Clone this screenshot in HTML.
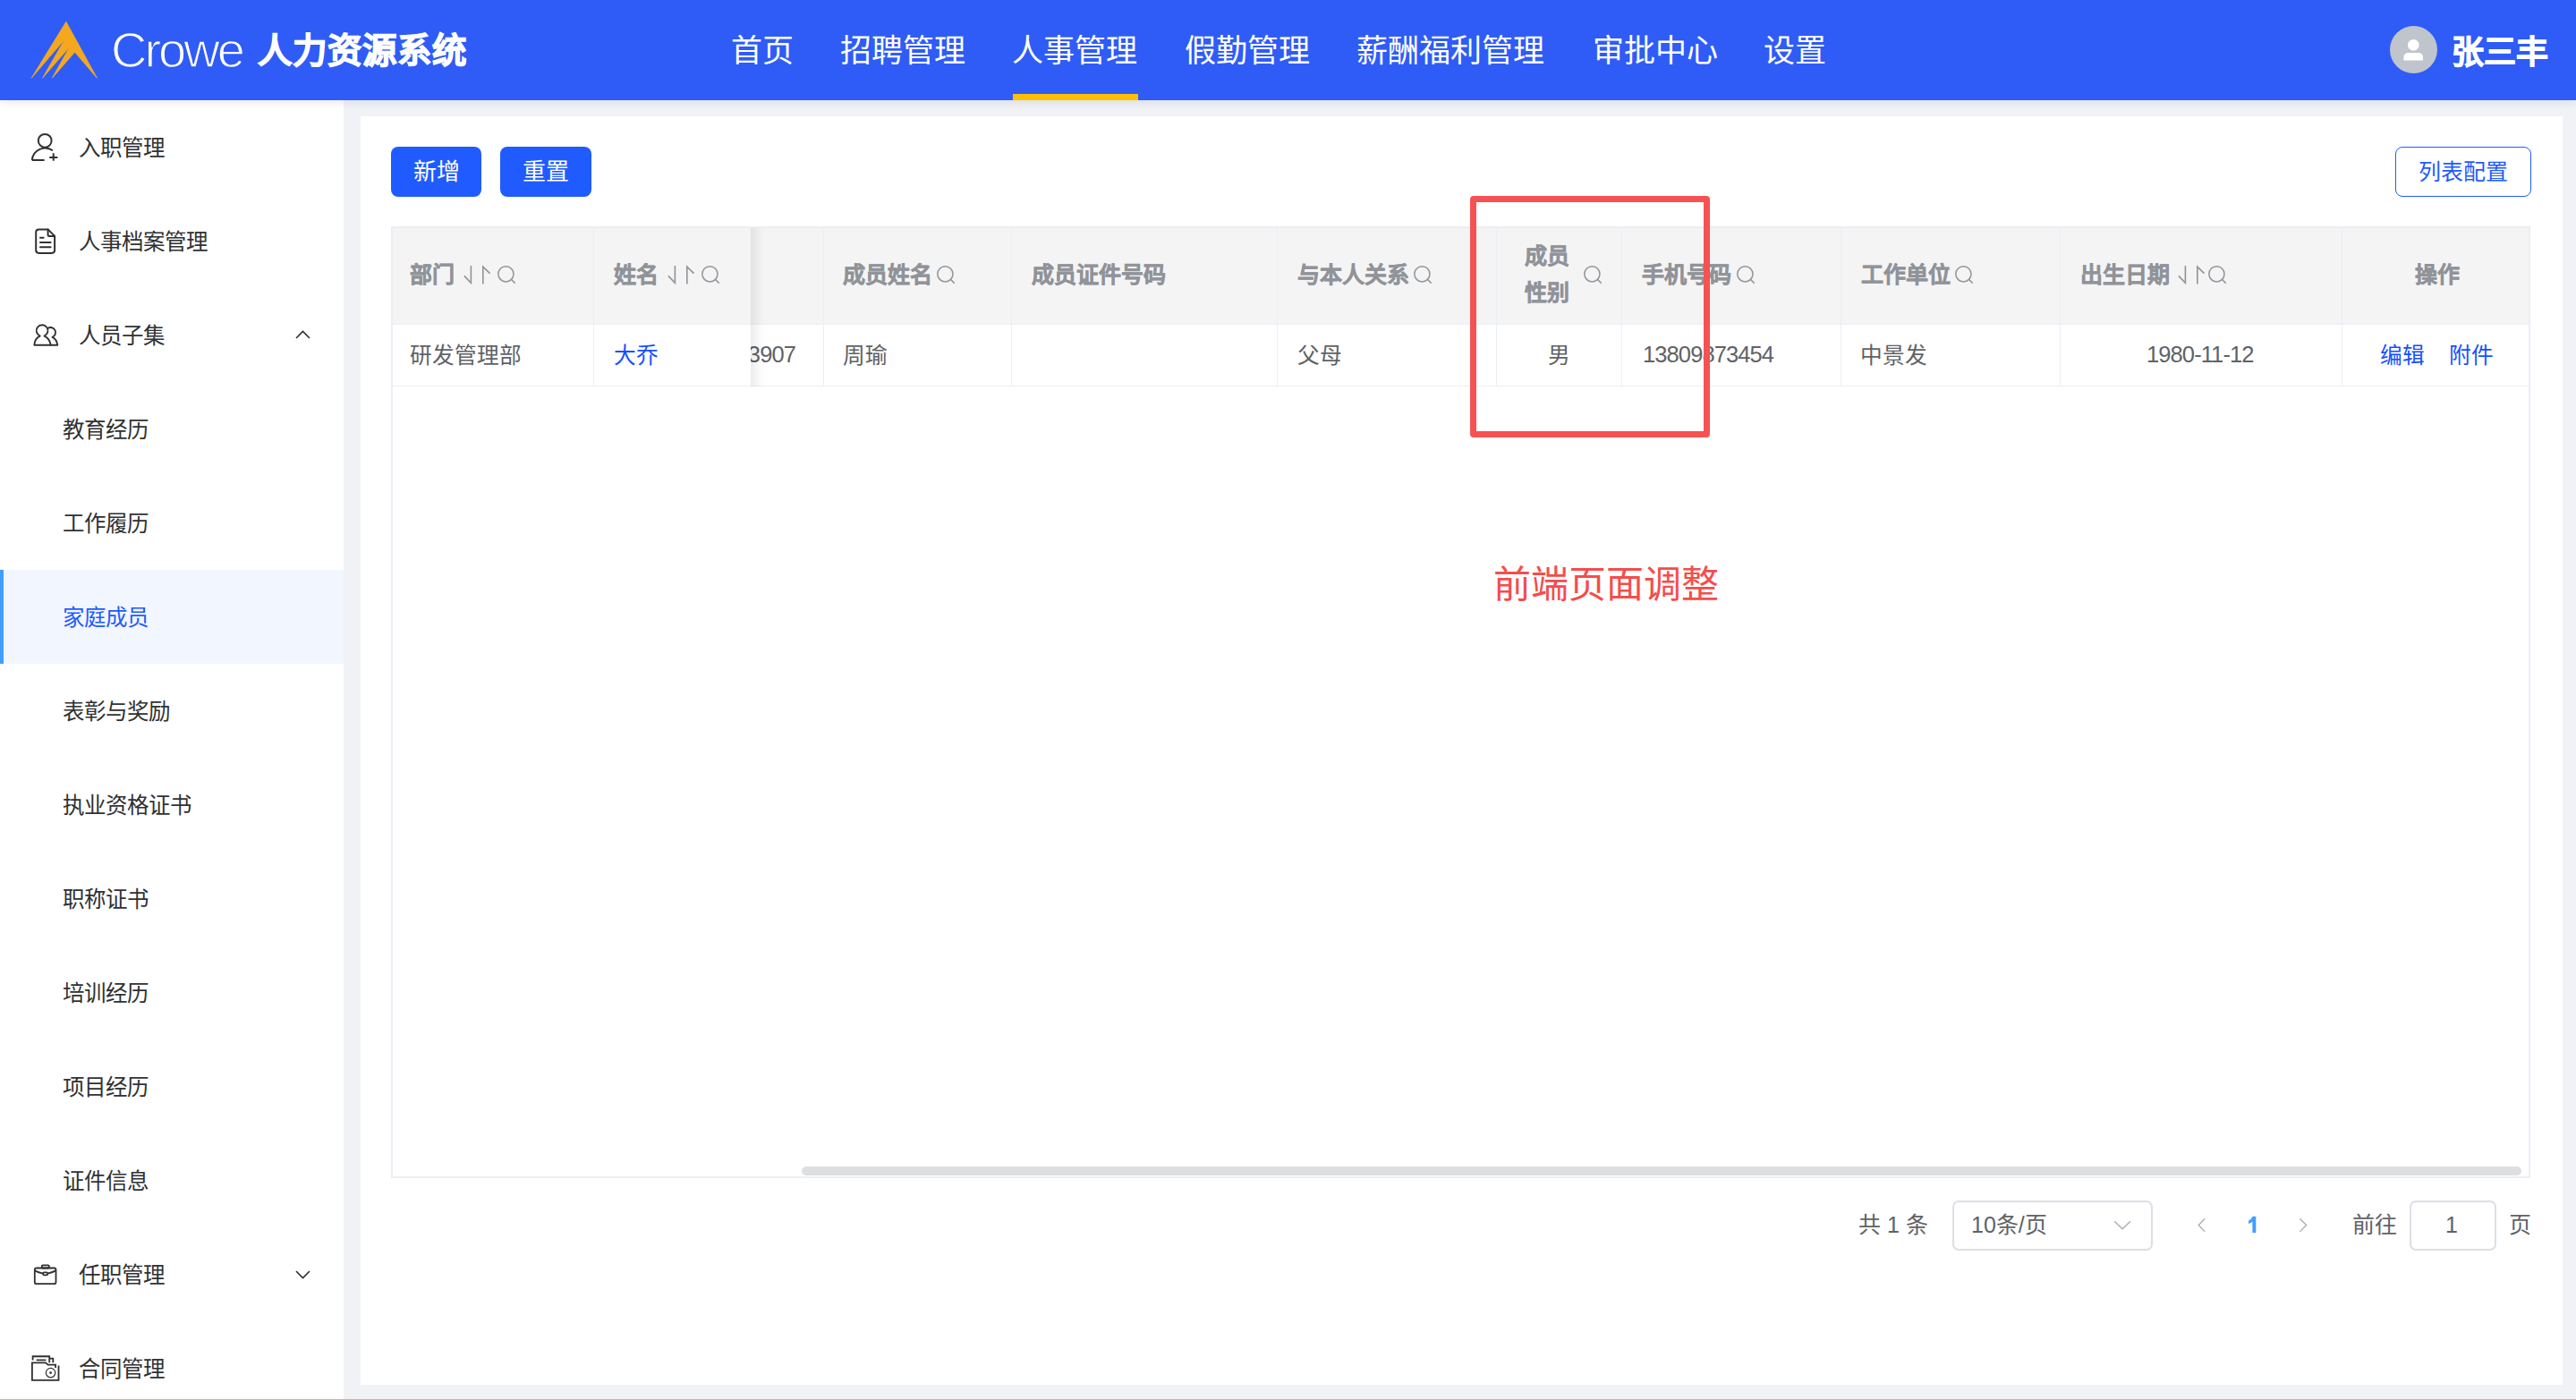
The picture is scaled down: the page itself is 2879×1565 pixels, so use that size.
<!DOCTYPE html>
<html lang="zh-CN">
<head>
<meta charset="utf-8">
<style>
*{margin:0;padding:0;box-sizing:border-box}
html,body{width:2879px;height:1565px;overflow:hidden;background:#F0F2F5;font-family:"Liberation Sans",sans-serif}
.a{position:absolute;white-space:nowrap}
#hdr{position:absolute;left:0;top:0;width:2879px;height:112px;background:#2F5CF6;z-index:5;box-shadow:0 2px 10px rgba(0,0,0,0.10)}
.nav{position:absolute;top:31px;font-size:35px;line-height:52px;color:#fff}
#side{position:absolute;left:0;top:112px;width:384px;height:1453px;background:#fff}
.mi{position:absolute;left:0;width:384px;height:105px;font-size:24.5px;color:#303133}
.mi span{position:absolute;top:1px;line-height:105px}
#card{position:absolute;left:403px;top:130px;width:2461px;height:1418px;background:#fff}
.btn{position:absolute;top:164px;height:56px;border-radius:8px;background:#1F5BFF;color:#fff;font-size:26px;line-height:56px;text-align:center}
#tbl{position:absolute;left:437px;top:253px;width:2391px;height:1064px;border:2px solid #EBEEF5;background:#fff;overflow:hidden}
.th{position:absolute;top:0;height:109px;background:#F5F5F5;border-right:1.5px solid #EBEEF5;border-bottom:1.5px solid #EBEEF5}
.td{position:absolute;top:109px;height:69px;background:#fff;border-right:1.5px solid #EBEEF5;border-bottom:1.5px solid #EBEEF5}
.ht{font-size:25px;font-weight:bold;color:#909399;line-height:40px;-webkit-text-stroke:0.5px #909399}
.bt{font-size:24.7px;color:#606266;line-height:40px}
.num{font-size:25.5px;letter-spacing:-0.9px}
.pg{font-size:25px;line-height:40px;color:#606266}
.pg .n{font-size:25px;display:inline-block}
.act{background:#F2F6FE;color:#1F5BFF}
.act:before{content:"";position:absolute;left:0;top:0;width:4px;height:105px;background:#409EFF}
</style>
</head>
<body>
<div id="hdr">
  <svg class="a" style="left:30px;top:20px" width="85" height="75" viewBox="0 0 85 75">
    <path d="M43.9 4.3 L78.4 67.2 L53.6 38.3 L28.4 67.2 L47.7 32.5 L17.5 67.2 L42.3 24 L5.2 67.2 Z" fill="#F5A81E" stroke="#F5A81E" stroke-width="0.8" stroke-linejoin="round"/>
  </svg>
  <div class="a" style="left:124px;top:20px;font-size:56px;line-height:72px;color:#fff;letter-spacing:-3px;-webkit-text-stroke:1.3px #2F5CF6">Crowe</div>
  <div class="a" style="left:288px;top:29px;font-size:38.5px;line-height:56px;color:#fff;font-weight:bold;-webkit-text-stroke:1.1px #fff">人力资源系统</div>
  <div class="nav" style="left:817px">首页</div>
  <div class="nav" style="left:939px">招聘管理</div>
  <div class="nav" style="left:1131px">人事管理</div>
  <div class="a" style="left:1132px;top:105px;width:140px;height:7px;background:#FFC000"></div>
  <div class="nav" style="left:1324px">假勤管理</div>
  <div class="nav" style="left:1516px">薪酬福利管理</div>
  <div class="nav" style="left:1780px">审批中心</div>
  <div class="nav" style="left:1971px">设置</div>
  <div class="a" style="left:2671px;top:29px;width:53px;height:53px;border-radius:50%;background:#C0C4CC"></div>
  <svg class="a" style="left:2671px;top:29px" width="53" height="53" viewBox="0 0 53 53"><circle cx="26.3" cy="21.3" r="6.3" fill="#fff"/><path d="M15.4 38.5 V35.5 Q15.4 30 21 30 H31.5 Q37 30 37 35.5 V38.5 Z" fill="#fff"/></svg>
  <div class="a" style="left:2740px;top:31px;font-size:36px;line-height:56px;color:#fff;font-weight:bold;-webkit-text-stroke:1px #fff">张三丰</div>
</div>

<div id="side">
  <svg class="a" style="left:25px;top:28px" width="50" height="50" viewBox="0 0 50 50" fill="none" stroke="#303133" stroke-width="2">
    <circle cx="25.2" cy="17.3" r="7.4"/>
    <path d="M10.8 38.9 A14.8 14.8 0 0 1 34 28.2"/>
    <path d="M10.8 38.9 H24.6 M30.2 35.9 H39.3 M34.7 31.3 V39.7"/>
  </svg>
  <div class="mi" style="top:0"><span style="left:88px">入职管理</span></div>
  <svg class="a" style="left:25px;top:133px" width="50" height="50" viewBox="0 0 50 50" fill="none" stroke="#303133" stroke-width="2" stroke-linejoin="round" stroke-linecap="round">
    <path d="M28.6 11.4 H18.4 Q15.2 11.4 15.2 14.6 V34.8 Q15.2 37.9 18.4 37.9 H32.9 Q36.1 37.9 36.1 34.8 V18.9 Z"/>
    <path d="M28.6 11.4 V17.4 Q28.6 18.9 30.1 18.9 H36.1"/>
    <path d="M20 20.7 H23.6 M20 25.9 H31.6 M20 31.2 H31.6"/>
  </svg>
  <div class="mi" style="top:105px"><span style="left:88px">人事档案管理</span></div>
  <svg class="a" style="left:25px;top:238px" width="50" height="50" viewBox="0 0 50 50" fill="none" stroke="#303133" stroke-width="1.9" stroke-linejoin="round">
    <path d="M13.4 35.7 C13.6 30.6 16 27.3 19.7 25.6 A6.4 6.4 0 1 1 24.5 25.6 C28.3 27.3 30.9 30.6 31.6 35.7 Z"/>
    <path d="M28.4 17 A5.6 5.6 0 1 1 33.5 26.9 C36.6 28.3 38.6 31.5 39.3 35.7 H31.6"/>
  </svg>
  <div class="mi" style="top:210px"><span style="left:88px">人员子集</span></div>
  <svg class="a" style="left:326px;top:250px" width="24" height="20" viewBox="0 0 24 20" fill="none" stroke="#303133" stroke-width="1.6"><path d="M5 16 L12.5 8.5 L20 16"/></svg>
  <div class="mi" style="top:315px"><span style="left:70px">教育经历</span></div>
  <div class="mi" style="top:420px"><span style="left:70px">工作履历</span></div>
  <div class="mi act" style="top:525px"><span style="left:70px">家庭成员</span></div>
  <div class="mi" style="top:630px"><span style="left:70px">表彰与奖励</span></div>
  <div class="mi" style="top:735px"><span style="left:70px">执业资格证书</span></div>
  <div class="mi" style="top:840px"><span style="left:70px">职称证书</span></div>
  <div class="mi" style="top:945px"><span style="left:70px">培训经历</span></div>
  <div class="mi" style="top:1050px"><span style="left:70px">项目经历</span></div>
  <div class="mi" style="top:1155px"><span style="left:70px">证件信息</span></div>
  <svg class="a" style="left:25px;top:1288px" width="50" height="50" viewBox="0 0 50 50" fill="none" stroke="#303133" stroke-width="1.8" stroke-linejoin="round">
    <rect x="13.8" y="17.5" width="23.7" height="17.7" rx="2"/>
    <rect x="21.8" y="14.3" width="8" height="3.2" rx="1"/>
    <path d="M13.8 20.4 Q18 22.6 23.2 23.6 M28.2 23.6 Q33 22.6 37.5 20.4"/>
    <rect x="23.2" y="22.4" width="5" height="3" rx="1.2"/>
  </svg>
  <div class="mi" style="top:1260px"><span style="left:88px">任职管理</span></div>
  <svg class="a" style="left:326px;top:1301px" width="24" height="20" viewBox="0 0 24 20" fill="none" stroke="#303133" stroke-width="1.6"><path d="M5 8 L12.5 15.5 L20 8"/></svg>
  <svg class="a" style="left:25px;top:1393px" width="50" height="50" viewBox="0 0 50 50" fill="none" stroke="#303133" stroke-width="1.8">
    <path d="M11.6 15.4 V11.25 H30.2 V18.2 M30.2 13.6 H34.3 V18.2 M15.7 15.4 H26.4"/>
    <path d="M40.5 21.4 V37.9 H10.9 V18.4 H26.1 L28.6 20.7 H37.1 V23.9"/>
    <circle cx="31.6" cy="29.6" r="5.2" stroke-width="1.2"/>
    <circle cx="31.6" cy="29.6" r="1.4" fill="#303133" stroke="none"/>
  </svg>
  <div class="mi" style="top:1365px"><span style="left:88px">合同管理</span></div>
</div>

<div id="card"></div>
<div class="btn" style="left:437px;width:101px">新增</div>
<div class="btn" style="left:559px;width:102px">重置</div>
<div class="a" style="left:2677px;top:164px;width:152px;height:56px;border:1.5px solid #1F5BFF;border-radius:8px;color:#1F5BFF;font-size:25px;line-height:54px;text-align:center">列表配置</div>

<div id="tbl">
<div class="a" style="left:0;top:0;width:2387px;height:107px;background:#F4F4F4"></div>
<div class="a" style="left:0;top:107px;width:2387px;height:1px;background:#EBEEF5"></div>
<div class="a" style="left:0;top:176px;width:2387px;height:1px;background:#EBEEF5"></div>
<div class="a" style="left:224px;top:0;width:1px;height:177px;background:#EBEEF5"></div>
<div class="a" style="left:481px;top:0;width:1px;height:177px;background:#EBEEF5"></div>
<div class="a" style="left:691px;top:0;width:1px;height:177px;background:#EBEEF5"></div>
<div class="a" style="left:988px;top:0;width:1px;height:177px;background:#EBEEF5"></div>
<div class="a" style="left:1233px;top:0;width:1px;height:177px;background:#EBEEF5"></div>
<div class="a" style="left:1373px;top:0;width:1px;height:177px;background:#EBEEF5"></div>
<div class="a" style="left:1618px;top:0;width:1px;height:177px;background:#EBEEF5"></div>
<div class="a" style="left:1863px;top:0;width:1px;height:177px;background:#EBEEF5"></div>
<div class="a" style="left:2178px;top:0;width:1px;height:177px;background:#EBEEF5"></div>
<div class="a" style="left:400px;top:0;width:81px;height:177px;overflow:hidden"><div class="a bt num" style="right:31px;top:121px">13563903907</div></div>
<div class="a" style="left:400px;top:0;width:17px;height:177px;background:linear-gradient(to right,rgba(0,0,0,0.075),rgba(0,0,0,0.02) 60%,rgba(0,0,0,0))"></div>
<div class="a ht" style="left:19px;top:32px">部门</div>
<svg class="a" style="left:79px;top:41px" width="31" height="23" viewBox="0 0 31 23" fill="none" stroke="#909399" stroke-width="1.6"><path d="M8.4 1 V20.3 L0.9 12.4 M21.8 21.5 V2.2 L29.5 9.6"/></svg>
<svg class="a" style="left:116px;top:41px" width="23" height="23" viewBox="0 0 23 23" fill="none" stroke="#909399" stroke-width="1.5"><circle cx="10.4" cy="10.3" r="8.6"/><path d="M16.6 16.5 L20.7 20.6"/></svg>
<div class="a ht" style="left:246.5px;top:32px">姓名</div>
<svg class="a" style="left:307px;top:41px" width="31" height="23" viewBox="0 0 31 23" fill="none" stroke="#909399" stroke-width="1.6"><path d="M8.4 1 V20.3 L0.9 12.4 M21.8 21.5 V2.2 L29.5 9.6"/></svg>
<svg class="a" style="left:344px;top:41px" width="23" height="23" viewBox="0 0 23 23" fill="none" stroke="#909399" stroke-width="1.5"><circle cx="10.4" cy="10.3" r="8.6"/><path d="M16.6 16.5 L20.7 20.6"/></svg>
<div class="a ht" style="left:503px;top:32px">成员姓名</div>
<svg class="a" style="left:607px;top:41px" width="23" height="23" viewBox="0 0 23 23" fill="none" stroke="#909399" stroke-width="1.5"><circle cx="10.4" cy="10.3" r="8.6"/><path d="M16.6 16.5 L20.7 20.6"/></svg>
<div class="a ht" style="left:713.5px;top:32px">成员证件号码</div>
<div class="a ht" style="left:1011px;top:32px">与本人关系</div>
<svg class="a" style="left:1140px;top:41px" width="23" height="23" viewBox="0 0 23 23" fill="none" stroke="#909399" stroke-width="1.5"><circle cx="10.4" cy="10.3" r="8.6"/><path d="M16.6 16.5 L20.7 20.6"/></svg>
<div class="a ht" style="left:1264.5px;top:11px;line-height:41px">成员<br>性别</div>
<svg class="a" style="left:1330px;top:41px" width="23" height="23" viewBox="0 0 23 23" fill="none" stroke="#909399" stroke-width="1.5"><circle cx="10.4" cy="10.3" r="8.6"/><path d="M16.6 16.5 L20.7 20.6"/></svg>
<div class="a ht" style="left:1395.5px;top:32px">手机号码</div>
<svg class="a" style="left:1501px;top:41px" width="23" height="23" viewBox="0 0 23 23" fill="none" stroke="#909399" stroke-width="1.5"><circle cx="10.4" cy="10.3" r="8.6"/><path d="M16.6 16.5 L20.7 20.6"/></svg>
<div class="a ht" style="left:1641px;top:32px">工作单位</div>
<svg class="a" style="left:1745px;top:41px" width="23" height="23" viewBox="0 0 23 23" fill="none" stroke="#909399" stroke-width="1.5"><circle cx="10.4" cy="10.3" r="8.6"/><path d="M16.6 16.5 L20.7 20.6"/></svg>
<div class="a ht" style="left:1886px;top:32px">出生日期</div>
<svg class="a" style="left:1995px;top:41px" width="31" height="23" viewBox="0 0 31 23" fill="none" stroke="#909399" stroke-width="1.6"><path d="M8.4 1 V20.3 L0.9 12.4 M21.8 21.5 V2.2 L29.5 9.6"/></svg>
<svg class="a" style="left:2028px;top:41px" width="23" height="23" viewBox="0 0 23 23" fill="none" stroke="#909399" stroke-width="1.5"><circle cx="10.4" cy="10.3" r="8.6"/><path d="M16.6 16.5 L20.7 20.6"/></svg>
<div class="a ht" style="left:2259.5px;top:32px">操作</div>
<div class="a bt " style="left:18.5px;top:123px">研发管理部</div>
<div class="a bt " style="left:247px;top:123px;color:#1550FF">大乔</div>
<div class="a bt " style="left:503px;top:123px">周瑜</div>
<div class="a bt " style="left:1011px;top:123px">父母</div>
<div class="a bt " style="left:1291px;top:123px">男</div>
<div class="a bt num" style="left:1397px;top:121px">13809873454</div>
<div class="a bt " style="left:1639.5px;top:123px">中景发</div>
<div class="a bt num" style="left:1960px;top:121px">1980-11-12</div>
<div class="a bt " style="left:2221px;top:123px;color:#1550FF">编辑</div>
<div class="a bt " style="left:2298px;top:123px;color:#1550FF">附件</div>
<div class="a" style="left:457px;top:1049px;width:1922px;height:10px;border-radius:5px;background:#DDDEE0"></div>
</div>


<div class="a pg" style="left:2077px;top:1349px">共 <span class="n">1</span> 条</div>
<div class="a" style="left:2182px;top:1342px;width:224px;height:56px;border:2px solid #DCDFE6;border-radius:7px;background:#fff"></div>
<div class="a pg" style="left:2203px;top:1349px"><span class="n">10</span>条/页</div>
<svg class="a" style="left:2360px;top:1360px" width="25" height="20" viewBox="0 0 25 20" fill="none" stroke="#A8ABB2" stroke-width="1.3"><path d="M3.2 5.3 L12.1 13.8 L20.9 5.3"/></svg>
<svg class="a" style="left:2450px;top:1358px" width="20" height="24" viewBox="0 0 20 24" fill="none" stroke="#A8ABB2" stroke-width="1.3"><path d="M14.2 4.2 L7.2 11.5 L14.2 18.9"/></svg>
<svg class="a" style="left:2510px;top:1356px" width="14" height="24" viewBox="0 0 14 24"><path d="M7.4 3.7 H11.3 V21.9 H7.4 V9.6 Q5.6 11.2 3 12 V8.6 Q6.2 7.4 7.6 3.7 Z" fill="#409EFF"/></svg>
<svg class="a" style="left:2563px;top:1358px" width="20" height="24" viewBox="0 0 20 24" fill="none" stroke="#A8ABB2" stroke-width="1.3"><path d="M7.3 4.2 L14.6 11.5 L7.3 18.9"/></svg>
<div class="a pg" style="left:2629px;top:1349px">前往</div>
<div class="a" style="left:2693px;top:1342px;width:97px;height:56px;border:2px solid #DCDFE6;border-radius:7px;background:#fff"></div>
<div class="a pg" style="left:2733px;top:1349px"><span class="n">1</span></div>
<div class="a pg" style="left:2804px;top:1349px">页</div>
<div class="a" style="left:1669px;top:624px;font-size:42px;line-height:60px;color:#F54C4C">前端页面调整</div>
<div class="a" style="left:1643px;top:219px;width:268px;height:270px;border:7px solid #F65253;border-radius:4px"></div>
<div class="a" style="left:0;top:1564px;width:2879px;height:1px;background:#C2BAA9;z-index:9"></div>
</body>
</html>
